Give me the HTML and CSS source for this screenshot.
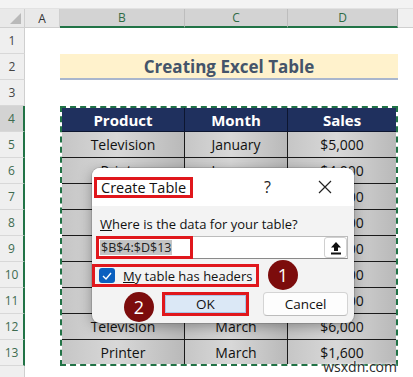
FILE: index.html
```html
<!DOCTYPE html>
<html>
<head>
<meta charset="utf-8">
<link rel="stylesheet" href="styles.css">
</head>
<body>
<div class="sheet">
  <div class="topband"></div>
  <div class="corner"><span class="tri"></span></div>
  <div class="colhead">A</div>
  <div class="colhead sel">B</div>
  <div class="colhead sel">C</div>
  <div class="colhead sel">D</div>
  <div class="colhead rest"></div>

  <div class="rowhead r1">1</div>
  <div class="rowhead r2">2</div>
  <div class="rowhead r3">3</div>
  <div class="rowhead r4 sel cur">4</div>
  <div class="rowhead r5 sel">5</div>
  <div class="rowhead r6 sel">6</div>
  <div class="rowhead r7 sel">7</div>
  <div class="rowhead r8 sel">8</div>
  <div class="rowhead r9 sel">9</div>
  <div class="rowhead r10 sel">10</div>
  <div class="rowhead r11 sel">11</div>
  <div class="rowhead r12 sel">12</div>
  <div class="rowhead r13 sel">13</div>
  <div class="rowhead r14"></div>

  <div class="title">Creating Excel Table</div>

  <div class="table">
    <div class="th">Product</div><div class="th">Month</div><div class="th last">Sales</div>
    <div class="td">Television</div><div class="td">January</div><div class="td last">$5,000</div>
    <div class="td">Printer</div><div class="td">January</div><div class="td last">$4,000</div>
    <div class="td">Blender</div><div class="td">February</div><div class="td last">$2,500</div>
    <div class="td">Laptop</div><div class="td">February</div><div class="td last">$8,000</div>
    <div class="td">Blender</div><div class="td">February</div><div class="td last">$3,000</div>
    <div class="td">Laptop</div><div class="td">March</div><div class="td last">$9,000</div>
    <div class="td">Printer</div><div class="td">March</div><div class="td last">$2,000</div>
    <div class="td">Television</div><div class="td">March</div><div class="td last">$6,000</div>
    <div class="td bot">Printer</div><div class="td bot">March</div><div class="td last bot">$1,600</div>
  </div>
</div>

<div class="dialog">
  <div class="dlg-title">
    <span class="dlg-name">Create Table</span>
    <span class="dlg-help">?</span>
    <svg class="dlg-close" width="14" height="14" viewBox="0 0 14 14"><path d="M1 1L13 13M13 1L1 13" stroke="#222" stroke-width="1.2" fill="none"/></svg>
  </div>
  <div class="dlg-body">
    <div class="dlg-label"><u>W</u>here is the data for your table?</div>
    <div class="dlg-input">
      <span class="range"><span class="range-sel">$B$4:$D$13</span></span>
      <span class="upload"><svg width="12" height="14" viewBox="0 0 12 14"><path d="M6 1L11 6.5H8V10H4V6.5H1Z" fill="#111"/><rect x="1" y="11.5" width="10" height="2" fill="#111"/></svg></span>
    </div>
    <div class="dlg-check">
      <span class="box"><svg width="10" height="8" viewBox="0 0 10 8"><path d="M1 4L4 7L9 1" stroke="#fff" stroke-width="1.4" fill="none"/></svg></span>
      <span class="check-text"><u>M</u>y table has headers</span>
    </div>
    <div class="dlg-buttons">
      <span class="btn ok">OK</span>
      <span class="btn cancel">Cancel</span>
    </div>
  </div>
</div>

<div class="badge b1">1</div>
<div class="badge b2">2</div>
<div class="watermark">wsxdn.com</div>
</body>
</html>
```

FILE: styles.css
```css
html, body {
  margin: 0;
  padding: 0;
  width: 413px;
  height: 377px;
  overflow: hidden;
  background: #fff;
  font-family: "Open Sans", "Noto Sans", sans-serif;
}

.sheet {
  display: grid;
  grid-template-columns: 25px 35px 125px 103px 110px 1fr;
  grid-template-rows: 9px 19px repeat(13, 26px) 1fr;
  width: 413px;
  height: 377px;
  background: #fff;
}

.topband {
  grid-column: 1 / -1;
  background: #f3f3f3;
  border-bottom: 1px solid #e2e2e2;
}

.corner {
  background: #e9e9e9;
  border-right: 1px solid #cfcfcf;
  border-bottom: 1px solid #cfcfcf;
  position: relative;
}
.corner .tri {
  position: absolute;
  right: 3px;
  bottom: 3px;
  width: 0;
  height: 0;
  border-left: 11px solid transparent;
  border-bottom: 11px solid #b9b9b9;
}

.colhead {
  background: #e9e9e9;
  border-right: 1px solid #cfcfcf;
  border-bottom: 1px solid #cfcfcf;
  font-size: 12px;
  color: #333;
  display: flex;
  align-items: center;
  justify-content: center;
}
.colhead.sel {
  background: #d3d3d3;
  color: #2f6b45;
  border-bottom: 2px solid #217346;
  border-right-color: #bdbdbd;
}
.colhead.rest {
  background: #f0f0f0;
  border-right: none;
}

.rowhead {
  grid-column: 1;
  background: #efefef;
  border-right: 1px solid #cfcfcf;
  border-bottom: 1px solid #d8d8d8;
  font-size: 12px;
  color: #444;
  display: flex;
  align-items: center;
  justify-content: center;
}
.rowhead.sel {
  border-right: 2px solid #217346;
  color: #3e6b4f;
}
.rowhead.cur {
  background: #d3d3d3;
}
.r1 { grid-row: 3; }
.r2 { grid-row: 4; }
.r3 { grid-row: 5; }
.r4 { grid-row: 6; }
.r5 { grid-row: 7; }
.r6 { grid-row: 8; }
.r7 { grid-row: 9; }
.r8 { grid-row: 10; }
.r9 { grid-row: 11; }
.r10 { grid-row: 12; }
.r11 { grid-row: 13; }
.r12 { grid-row: 14; }
.r13 { grid-row: 15; }
.r14 { grid-row: 16; border-bottom: none; }

.title {
  grid-column: 3 / 6;
  grid-row: 4;
  background: #fff2cc;
  border-bottom: 2px solid #a9b6cd;
  color: #44546a;
  font-weight: 700;
  font-size: 17px;
  display: flex;
  align-items: center;
  justify-content: center;
  padding-top: 1px;
}

.table {
  grid-column: 3 / 6;
  grid-row: 6 / 16;
  border: 2px dashed #217346;
  background: #fff;
  display: grid;
  grid-template-columns: 123px 103px 1fr;
  grid-template-rows: 24px repeat(8, 26px) 1fr;
}

.th {
  background: #1f305e;
  color: #fff;
  font-weight: 700;
  font-size: 15px;
  display: flex;
  align-items: center;
  justify-content: center;
  border-right: 1px solid #0d1630;
  border-bottom: 1px solid #0d1630;
}
.td {
  background: linear-gradient(90deg, #c6c6c6 0%, #d8d8d8 45%, #b9b9b9 100%);
  color: #111;
  font-size: 14px;
  display: flex;
  align-items: center;
  justify-content: center;
  border-right: 1px solid #1a1a1a;
  border-bottom: 1px solid #1a1a1a;
}
.th.last, .td.last { border-right: none; }
.td.bot { border-bottom: none; }

.dialog {
  position: absolute;
  left: 92px;
  top: 168px;
  width: 262px;
  height: 155px;
  border-radius: 8px;
  background: #f3f3f3;
  box-shadow: 0 3px 14px rgba(0, 0, 0, 0.35), 0 0 0 1px rgba(0, 0, 0, 0.12);
  overflow: hidden;
  display: flex;
  flex-direction: column;
}
.dlg-title {
  height: 38px;
  flex: none;
  background: #fff;
  display: flex;
  align-items: center;
}
.dlg-name {
  margin-left: 2px;
  margin-top: 1px;
  height: 21px;
  width: 99px;
  flex: none;
  box-sizing: border-box;
  border: 3px solid #e0171c;
  font-size: 14.5px;
  white-space: nowrap;
  padding-left: 4px;
  color: #111;
  display: flex;
  align-items: center;
}
.dlg-help {
  margin-left: 71px;
  font-size: 16px;
  color: #222;
}
.dlg-close {
  margin-left: 47px;
}

.dlg-body {
  display: flex;
  flex-direction: column;
  padding: 8px 6px 0 4px;
}
.dlg-label {
  font-size: 13px;
  white-space: nowrap;
  color: #111;
  padding-left: 4px;
  height: 21px;
  line-height: 21px;
}
.dlg-input {
  margin-top: 1px;
  height: 23px;
  box-sizing: border-box;
  background: #fff;
  border: 1px solid #bcbcbc;
  border-bottom-color: #8a8a8a;
  display: flex;
  align-items: center;
  justify-content: space-between;
}
.range {
  height: 23px;
  width: 97px;
  margin-left: -1px;
  box-sizing: border-box;
  border: 3px solid #e0171c;
  display: flex;
  align-items: center;
  padding-left: 1px;
}
.range-sel {
  background: #c4c4c4;
  color: #222;
  font-size: 12.5px;
  line-height: 15px;
  white-space: nowrap;
  padding: 0 1px;
}
.upload {
  width: 23px;
  height: 21px;
  box-sizing: border-box;
  border: 1px solid #d0d0d0;
  border-radius: 3px;
  background: #fff;
  display: flex;
  align-items: center;
  justify-content: center;
}

.dlg-check {
  margin-top: 5px;
  margin-left: -4px;
  width: 167px;
  height: 23px;
  box-sizing: border-box;
  border: 3px solid #e0171c;
  display: flex;
  align-items: center;
  gap: 8px;
  padding-left: 4px;
  font-size: 13px;
  color: #111;
}
.check-text {
  white-space: nowrap;
}
.box {
  width: 16px;
  height: 15px;
  flex: none;
  border-radius: 3px;
  background: #0a5fbf;
  display: flex;
  align-items: center;
  justify-content: center;
}

.dlg-buttons {
  margin-top: 5px;
  display: flex;
  gap: 14px;
  padding-left: 66px;
}
.btn {
  height: 24px;
  box-sizing: border-box;
  font-size: 13.5px;
  color: #111;
  display: flex;
  align-items: center;
  justify-content: center;
}
.btn.ok {
  width: 87px;
  border: 3px solid #e0171c;
  background: #dbe8f6;
  box-shadow: inset 0 0 0 1px #a9c6e8;
}
.btn.cancel {
  width: 85px;
  border: 1px solid #d4d4d4;
  border-bottom-color: #bcbcbc;
  border-radius: 4px;
  background: #fdfdfd;
}

.badge {
  position: absolute;
  width: 30px;
  height: 30px;
  border-radius: 50%;
  background: #7c0c0c;
  color: #fff;
  font-size: 18px;
  display: flex;
  align-items: center;
  justify-content: center;
}
.b1 { left: 268px; top: 260px; }
.b2 { left: 124px; top: 292px; }

.watermark {
  position: absolute;
  right: 16px;
  bottom: 1px;
  font-size: 14px;
  color: #2a2a2a;
  text-shadow: 0 0 3px #fff, 0 0 3px #fff;
}
```
